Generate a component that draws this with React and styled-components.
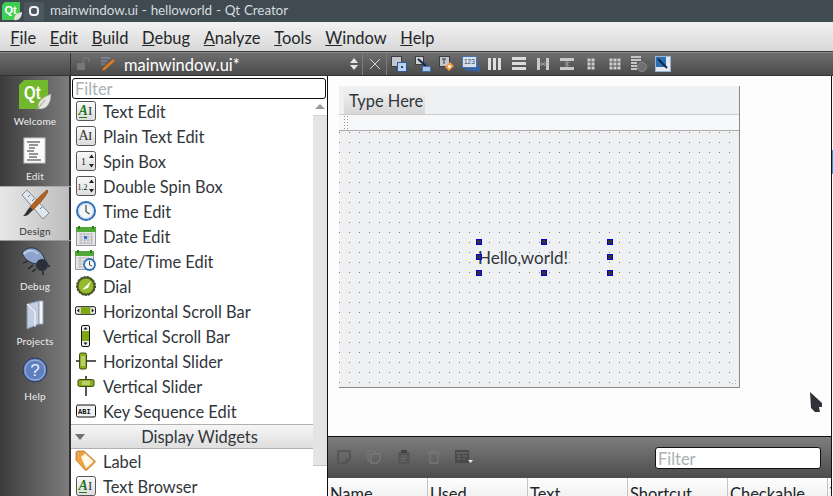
import React from 'react'
import styled, { createGlobalStyle } from 'styled-components'

const Global = createGlobalStyle`
	html, body { margin: 0; padding: 0; background: #fff; overflow: hidden; }
	*, *::before, *::after { box-sizing: border-box; }
`

const Window = styled.div`
	width: 833px;
	height: 496px;
	display: flex;
	flex-direction: column;
	overflow: hidden;
	font-family: Lato, "Open Sans", sans-serif;
	color: #31363b;
	font-size: 16.45px;
`

const TitleBar = styled.div`
	height: 22px;
	flex: none;
	display: flex;
	align-items: center;
	padding-left: 2px;
	background: #3f4a51;
	color: #d5dbdf;
	font-size: 13.5px;
	letter-spacing: -0.1px;
	word-spacing: 0.5px;
`

const TitleText = styled.span`
	margin-bottom: 2px;
`

const WinButton = styled.div`
	width: 20px;
	height: 19px;
	flex: none;
	margin: 0 6px 0 2px;
	border-radius: 2px;
	background: #4c5760;
	display: flex;
	align-items: center;
	justify-content: center;
	&::after {
		content: '';
		width: 10px;
		height: 10px;
		border: 2px solid #f2f2f2;
		border-radius: 4px;
	}
`

const MenuBar = styled.div`
	height: 30px;
	flex: none;
	display: flex;
	align-items: center;
	padding: 2px 0 0 3.5px;
	background: linear-gradient(#f2f2f2, #d8d8d8);
	border-bottom: 1px solid #3a3a3a;
`

const MenuItem = styled.div`
	padding: 0 6.85px;
	color: #232629;
	span { text-decoration: underline; }
`

const DocBar = styled.div`
	height: 24px;
	flex: none;
	display: flex;
	align-items: center;
	background: linear-gradient(#6e6e6e, #5e5e5e 45%, #4a4a4a);
	border-top: 1px solid #8a8a8a;
	border-bottom: 1px solid #333;
`

const DocCorner = styled.div`
	width: 71px;
	height: 100%;
	flex: none;
	border-right: 1px solid #333;
`

const DocName = styled.div`
	width: 221px;
	flex: none;
	margin-left: 5px;
	padding-top: 2px;
	color: #fff;
`

const DocIcon = styled.div`
	width: ${p => p.w || 24}px;
	flex: none;
	display: flex;
	justify-content: center;
`

const Sep = styled.div`
	width: 1px;
	height: 100%;
	flex: none;
	background: #7a7a7a;
`

const Body = styled.div`
	flex: 1;
	min-height: 0;
	display: flex;
`

const Sidebar = styled.div`
	width: 71px;
	flex: none;
	background: linear-gradient(90deg, #3c3c3c, #7c7c7c 97%, #2e2e2e 97%);
`

const Mode = styled.div`
	height: 55px;
	display: flex;
	flex-direction: column;
	align-items: center;
	justify-content: flex-end;
	padding: 0 1px ${p => (p.active ? 3 : 4)}px 0;
	color: ${p => (p.active ? '#333' : '#eee')};
	font-size: 10px;
	letter-spacing: 0.2px;
	${p => p.active && `
		background: linear-gradient(90deg, #e8e8e8, #bdbdbd 97%, #2e2e2e 97%);
		border-top: 1px solid #aaa;
		border-bottom: 1px solid #999;
	`}
`

const ModeIcon = styled.div`
	height: 36px;
	margin-bottom: 2px;
	display: flex;
	align-items: center;
`

const WidgetBox = styled.div`
	width: 257px;
	flex: none;
	display: flex;
	flex-direction: column;
	background: #fff;
	border-right: 1px solid #111;
`

const FilterInput = styled.div`
	height: ${p => p.h}px;
	margin: ${p => p.m};
	width: ${p => p.w || 'auto'};
	flex: none;
	background: #fff;
	border: 1px solid #111;
	border-radius: 3px;
	color: #aab0b4;
	line-height: ${p => p.h}px;
	padding-left: 2px;
	overflow: hidden;
`

const ListArea = styled.div`
	flex: 1;
	min-height: 0;
	display: flex;
`

const List = styled.div`
	flex: 1;
	min-width: 0;
`

const Row = styled.div`
	height: 25px;
	display: flex;
	align-items: center;
	padding-left: 4px;
	gap: 7px;
	white-space: nowrap;
`

const RowIcon = styled.div`
	width: 21px;
	margin-top: -2px;
	display: flex;
	justify-content: center;
`

const CategoryHeader = styled.div`
	height: 25px;
	display: flex;
	align-items: center;
	padding-left: 4px;
	background: linear-gradient(#f6f6f6, #dedede);
	border-top: 1px solid #b0b0b0;
	border-bottom: 1px solid #b0b0b0;
	&::before {
		content: '';
		border: 5px solid transparent;
		border-top: 6px solid #6e6e6e;
		border-bottom: 0;
	}
	span { flex: 1; text-align: center; margin-left: 1px; }
`

const ScrollBar = styled.div`
	width: 14px;
	flex: none;
	display: flex;
	flex-direction: column;
`

const ScrollUp = styled.div`
	height: 16px;
	display: flex;
	justify-content: center;
	padding-top: 5px;
	&::after {
		content: '';
		height: 5px;
		border: 5px solid transparent;
		border-bottom: 5px solid #9a9a9a;
		border-top: 0;
	}
`

const ScrollThumb = styled.div`
	height: 351px;
	background: #e3e4e4;
	border-top: 1px solid #d4d4d4;
	border-bottom: 1px solid #c8c8c8;
`

const Editor = styled.div`
	flex: 1;
	min-width: 0;
	display: flex;
	flex-direction: column;
	background: #fdfdfd;
`

const Canvas = styled.div`
	height: 361px;
	flex: none;
	padding: 10px 0 0 11px;
	position: relative;
	border-bottom: 1px solid #111;
`

const Form = styled.div`
	width: 401px;
	height: 302px;
	display: flex;
	flex-direction: column;
	background: #eff0f1;
	border-right: 1px solid #888;
	border-bottom: 1px solid #888;
`

const FormMenu = styled.div`
	height: 29px;
	flex: none;
	padding: 5px 0 0 5px;
	border-bottom: 1px solid #ccc;
`

const FormMenuItem = styled.div`
	width: 81px;
	height: 23px;
	padding-left: 5px;
	line-height: 21px;
	background: linear-gradient(#f0f0f1, #d6d6d6);
`

const FormToolbar = styled.div`
	height: 16px;
	flex: none;
	padding-left: 5px;
	background: #f7f8f9;
	border-bottom: 1px solid #aaa;
	&::before {
		content: '';
		display: block;
		width: 5px;
		height: 100%;
		background: conic-gradient(at 1px 1px, transparent 75%, #999 0) 0 1px / 3px 3px;
	}
`

const Grid = styled.div`
	flex: 1;
	position: relative;
	background: conic-gradient(at 1px 1px, transparent 75%, #808080 0) 0 1px / 10px 10px;
`

const LabelBox = styled.div`
	position: absolute;
	left: 137px;
	top: 108px;
	width: 134px;
	height: 35px;
`

const HelloText = styled.div`
	position: absolute;
	left: 2px;
	top: 8px;
	font-size: 17px;
	white-space: nowrap;
`

const Handle = styled.div`
	position: absolute;
	left: ${p => p.x}px;
	top: ${p => p.y}px;
	width: 6px;
	height: 6px;
	background: #333;
	border: 1px solid #0000e0;
`

const Grip = styled.div`
	position: absolute;
	right: 1px;
	bottom: 1px;
	width: 9px;
	height: 9px;
	background: conic-gradient(at 1px 1px, transparent 75%, #aaa 0) 0 0 / 3px 3px;
	clip-path: polygon(100% 0, 100% 100%, 0 100%);
`

const Cursor = styled.svg`
	position: absolute;
	left: 482px;
	top: 316px;
`

const ActionBar = styled.div`
	height: 41px;
	flex: none;
	display: flex;
	align-items: center;
	padding-left: 1px;
	background: linear-gradient(#7e7e7e, #4c4c4c);
`

const ActionIcon = styled.div`
	width: 30px;
	margin-bottom: 1px;
	display: flex;
	justify-content: center;
`

const Spacer = styled.div`
	flex: 1;
`

const TableHead = styled.div`
	flex: 1;
	display: flex;
	overflow: hidden;
	background: linear-gradient(#fdfdfd, #f2f2f2);
`

const HeadCell = styled.div`
	width: 100px;
	flex: none;
	padding: 6px 0 0 2px;
	border-right: 1px solid #c4c4c4;
	color: #232629;
	white-space: nowrap;
`

const RightEdge = styled.div`
	width: 2px;
	flex: none;
	background: linear-gradient(90deg, #111 50%, #fff 50%);
	&::after {
		content: '';
		display: block;
		width: 1px;
		height: 24px;
		margin: 74px 0 0 1px;
		background: #1e9be8;
	}
`

const Ico = ({ s = 20, h, children }) => (
	<svg width={s} height={h || s} viewBox={`0 0 ${s} ${h || s}`} style={{ display: 'block' }}>{children}</svg>
)

const QtLogo = ({ s = 34 }) => (
	<svg width={s} height={s * 0.94} viewBox="0 0 34 32" style={{ display: 'block' }}>
		<path d="M6 1 H30 V23 L24 30 H1 V6 Z" fill="#72b82c" />
		<text x="6" y="20" fontSize="18" fontWeight="700" fontFamily="Liberation Sans" fill="#fff" textLength="17" lengthAdjust="spacingAndGlyphs">Qt</text>
		<path d="M20 30 C19 22 25 18 33 15 C33 24 29 31 20 30 Z" fill="#e4e6df" stroke="#9a9a90" strokeWidth=".6" />
		<path d="M18 32 L27 21" stroke="#888" strokeWidth=".8" />
	</svg>
)

const Keycap = ({ children }) => (
	<Ico s={20}>
		<defs>
			<linearGradient id="cap" x1="0" y1="0" x2="0" y2="1">
				<stop offset="0" stopColor="#fafafa" />
				<stop offset="1" stopColor="#dcdcdc" />
			</linearGradient>
		</defs>
		<rect x=".5" y=".5" width="19" height="19" rx="2" fill="url(#cap)" stroke="#555" />
		{children}
	</Ico>
)

const TextEditIcon = ({ green }) => (
	<Keycap>
		<text x="2.5" y="14" fontFamily="Liberation Serif" fontStyle={green ? 'italic' : 'normal'} fontWeight={green ? 700 : 400} fontSize="14" fill={green ? '#1f7a1f' : '#333'}>A</text>
		<text x="12" y="14" fontFamily="Liberation Serif" fontSize="13" fill="#333">I</text>
		{green && <path d="M3 16.5 H11" stroke="#1f7a1f" />}
	</Keycap>
)

const SpinIcon = ({ label, size }) => (
	<Keycap>
		<text x={label.length > 1 ? 1.5 : 5} y="13.5" fontFamily="Liberation Serif" fontSize={size} fill="#222">{label}</text>
		<path d="M13 7 L15.5 3.5 L18 7 Z M13 13 L15.5 16.5 L18 13 Z" fill="#222" />
	</Keycap>
)

const ClockIcon = () => (
	<Ico s={20}>
		<circle cx="10" cy="10" r="9" fill="#f4f6f8" stroke="#2f6fb5" strokeWidth="2" />
		<circle cx="10" cy="10" r="7.4" fill="none" stroke="#a8c8ea" strokeWidth=".8" />
		<path d="M10 4 V10.5 L13.5 13" fill="none" stroke="#444" strokeWidth="1.2" />
	</Ico>
)

const CalendarIcon = () => (
	<Ico s={20}>
		<rect x=".5" y="1.5" width="19" height="18" fill="#e4e6e8" stroke="#999" />
		<rect x="0" y="1" width="20" height="5" fill="#4fa838" />
		<path d="M3 0 V3 M17 0 V3" stroke="#2c7a20" strokeWidth="2" />
		<path d="M3 8 H17 M3 11 H17 M3 14 H17 M3 17 H17 M5 7 V18 M8.5 7 V18 M12 7 V18 M15.5 7 V18" stroke="#aeb2b6" strokeWidth=".8" />
		<rect x="8" y="10" width="3" height="3" fill="#3b6fd0" />
	</Ico>
)

const DateTimeIcon = () => (
	<Ico s={21}>
		<rect x=".5" y="1.5" width="18" height="18" fill="#e4e6e8" stroke="#999" />
		<rect x="0" y="1" width="19" height="5" fill="#4fa838" />
		<path d="M3 0 V3 M16 0 V3" stroke="#2c7a20" strokeWidth="2" />
		<path d="M3 8 H14 M3 11 H10 M3 14 H8 M3 17 H8 M5 7 V18" stroke="#aeb2b6" strokeWidth=".8" />
		<circle cx="14.5" cy="14.5" r="5.5" fill="#f4f6f8" stroke="#2f6fb5" strokeWidth="1.8" />
		<path d="M14.5 11 V15 L17 16" fill="none" stroke="#444" />
	</Ico>
)

const DialIcon = () => (
	<Ico s={20}>
		<circle cx="10" cy="10" r="9.5" fill="#4d5a22" strokeDasharray="2 1.5" stroke="#333" />
		<circle cx="10" cy="10" r="7.5" fill="#94bb2c" />
		<path d="M6 14 L15 5 L12 12 Z" fill="#fff" />
	</Ico>
)

const HScrollIcon = () => (
	<Ico s={22} h={12}>
		<rect x=".5" y="1.5" width="21" height="8" rx="1.5" fill="#eee" stroke="#111" />
		<rect x="6" y="2" width="10" height="7" fill="#7ea80f" />
		<path d="M2 5.5 L4.5 3.5 V7.5 Z M20 5.5 L17.5 3.5 V7.5 Z" fill="#111" />
	</Ico>
)

const VScrollIcon = () => (
	<Ico s={12} h={22}>
		<rect x="1.5" y=".5" width="8" height="21" rx="1.5" fill="#eee" stroke="#111" />
		<rect x="2" y="6" width="7" height="10" fill="#7ea80f" />
		<path d="M5.5 2 L3.5 4.5 H7.5 Z M5.5 20 L3.5 17.5 H7.5 Z" fill="#111" />
	</Ico>
)

const HSliderIcon = () => (
	<Ico s={20}>
		<path d="M0 10 H20" stroke="#222" strokeWidth="1.5" />
		<rect x="3.5" y="2" width="7" height="16" rx="1.5" fill="#8aae1c" stroke="#3c4a10" />
		<path d="M6 5 V15 M8 5 V15" stroke="#e6f0c0" />
	</Ico>
)

const VSliderIcon = () => (
	<Ico s={20}>
		<path d="M10 0 V20" stroke="#222" strokeWidth="1.5" />
		<rect x="2" y="3.5" width="16" height="7" rx="1.5" fill="#8aae1c" stroke="#3c4a10" />
		<path d="M6 6 H14 M6 8 H14" stroke="#e6f0c0" />
	</Ico>
)

const KeySeqIcon = () => (
	<Ico s={20} h={14}>
		<rect x=".5" y="1" width="19" height="12" rx="1.5" fill="#f1f1f1" stroke="#111" />
		<text x="2" y="10" fontFamily="Liberation Mono" fontSize="7" fontWeight="700" fill="#111">ABI</text>
	</Ico>
)

const LabelIcon = () => (
	<Ico s={21}>
		<path d="M1 3 Q1 1 3 1 H9 L20 11 Q20.5 12 19.5 13 L12 20 Q11 20.5 10 20 L1 10 Z" fill="#f0a33c" stroke="#a86a1c" strokeWidth=".7" />
		<path d="M6 7 L10 3.5 L18.5 11.5 L11 18.5 Z" fill="#fffaf0" />
		<circle cx="3.5" cy="3.5" r="1" fill="#fff" stroke="#8a5a1c" strokeWidth=".5" />
	</Ico>
)

const WelcomeIcon = () => <QtLogo s={34} />

const EditIcon = () => (
	<Ico s={24} h={27}>
		<rect x="1" y="1" width="21" height="25" fill="#fafafa" stroke="#c8c8c8" />
		<path d="M4 5 H17 M6 8 H15 M6 11 H12 M4 14 H11 M6 17 H15 M6 20 H14 M4 23 H18" stroke="#333" />
	</Ico>
)

const DesignIcon = () => (
	<Ico s={30} h={32}>
		<path d="M2 6 L7 1 L29 24 L23 30 Z" fill="#dfe6ee" stroke="#7d8a98" />
		<path d="M8 8 L10 6 M12 12 L14 10 M16 16 L18 14 M20 20 L22 18" stroke="#6a7684" />
		<path d="M27 1 C22 5 14 13 10 18 L13 21 C18 16 26 8 28 2 Z" fill="#b3611d" stroke="#6c3a10" strokeWidth=".6" />
		<path d="M10 18 L13 21 L9 25 C7 27 5 27 3 27 C6 25 6 22 10 18 Z" fill="#333" />
	</Ico>
)

const DebugIcon = () => (
	<Ico s={30} h={30}>
		<path d="M2 8 C8 -1 22 2 25 16 C18 22 6 18 2 8 Z" fill="#8ea3cb" stroke="#27324a" />
		<path d="M4 9 C9 4 14 5 18 9" fill="none" stroke="#c6d3ea" strokeWidth="1.5" />
		<circle cx="22" cy="20" r="6" fill="#2a3038" />
		<path d="M16 24 L12 27 M23 26 L23 30 M28 20 L30 22 M8 16 L3 18 M13 20 L8 24" stroke="#222" strokeWidth="1.3" />
	</Ico>
)

const ProjectsIcon = () => (
	<Ico s={20} h={30}>
		<path d="M2 4 L14 1 V24 L2 29 Z" fill="#c3cfe0" stroke="#8393aa" />
		<path d="M14 1 H18 V24 H14 Z" fill="#f2f5f9" stroke="#9aa6b8" />
		<path d="M2 4 L10 12 V27" fill="none" stroke="#fff" strokeWidth="1" />
	</Ico>
)

const HelpIcon = () => (
	<Ico s={26}>
		<circle cx="13" cy="13" r="12" fill="#5f7fbf" stroke="#24365e" />
		<circle cx="13" cy="13" r="10" fill="none" stroke="#a6b9de" />
		<text x="13" y="19" textAnchor="middle" fontFamily="Liberation Sans" fontSize="17" fill="#e8eefa">?</text>
	</Ico>
)

const LockIcon = () => (
	<Ico s={14} h={14}>
		<rect x="0" y="6" width="8" height="7" fill="#777" />
		<path d="M6 6 V3 Q6 1 9 1 Q12 1 12 3 V5" fill="none" stroke="#777" strokeWidth="1.3" />
	</Ico>
)

const PencilIcon = () => (
	<Ico s={16}>
		<path d="M1 2 H10 M1 5 H7 M1 8 H5" stroke="#8e9cb3" />
		<path d="M13 3 L15 5 L5 14 L2 15 L3 12 Z" fill="#d9822b" stroke="#8a4c12" strokeWidth=".5" />
	</Ico>
)

const UpDown = () => (
	<Ico s={10} h={14}>
		<path d="M5 1 L9 6 H1 Z M5 13 L9 8 H1 Z" fill="#e6e6e6" />
	</Ico>
)

const CloseX = () => (
	<Ico s={12}>
		<path d="M1 1 L11 11 M11 1 L1 11" stroke="#d6d6d6" strokeWidth="1" />
	</Ico>
)

const Square = ({ x, y, w, h, fill = '#c4c8cc', stroke = '#3b3f44' }) => (
	<rect x={x + 0.5} y={y + 0.5} width={w} height={h} fill={fill} stroke={stroke} />
)

const WidgetEditIcon = () => (
	<Ico s={16}>
		<Square x={0} y={0} w={10} h={10} />
		<Square x={6} y={6} w={9} h={9} fill="#bcd2ef" stroke="#2a5c98" />
		<rect x="10" y="10" width="2" height="2" fill="#1d4f8c" />
	</Ico>
)

const SignalIcon = () => (
	<Ico s={16}>
		<Square x={0} y={0} w={8} h={8} fill="#d0d0d0" />
		<path d="M3 3 L11 10" stroke="#0c2a50" strokeWidth="2" />
		<Square x={7} y={10} w={8} h={5} fill="#a8c4e8" stroke="#3f6ea8" />
	</Ico>
)

const BuddyIcon = () => (
	<Ico s={16}>
		<Square x={0} y={0} w={10} h={10} />
		<path d="M3 3 H7 M5 3 V8" stroke="#333" />
		<path d="M6 11 L11 6 L15 10 L10 15 Z" fill="#f59a3c" />
		<circle cx="10.5" cy="10.5" r="1.5" fill="#fff" />
	</Ico>
)

const TabOrderIcon = () => (
	<Ico s={18} h={16}>
		<Square x={0} y={0} w={14} h={11} fill="#d8e0ec" stroke="#4a72ad" />
		<text x="2" y="8" fontFamily="Liberation Sans" fontSize="6.5" fill="#23456f">123</text>
		<path d="M3 13.5 H14" stroke="#2a6ac0" strokeWidth="2" />
		<path d="M16.5 9 V16" stroke="#2a6ac0" strokeWidth="2" />
		<path d="M12 10.5 L15 13.5 L12 16 Z" fill="#2a6ac0" />
	</Ico>
)

const Bars = ({ vertical }) => (
	<Ico s={14}>
		{[1, 6, 11].map(p => (vertical
			? <rect key={p} x={p - 1} y="1" width="3" height="12" fill="#dcdcdc" />
			: <rect key={p} x="0" y={p - 1} width="14" height="3" fill="#dcdcdc" />))}
	</Ico>
)

const SplitH = () => (
	<Ico s={14}>
		<path d="M1 1 H4 V13 H1 Z M10 1 H13 V13 H10 Z" fill="#c8c8c8" />
		<path d="M4 7 H10 M5 5 L7 7 L5 9 M9 5 L7 7 L9 9" stroke="#9a9a9a" fill="none" />
	</Ico>
)

const SplitV = () => (
	<Ico s={16} h={14}>
		<path d="M1 1 H15 V4 H1 Z M1 10 H15 V13 H1 Z" fill="#c8c8c8" />
		<path d="M8 4 V10 M6 5 L8 7 L10 5 M6 9 L8 7 L10 9" stroke="#9a9a9a" fill="none" />
	</Ico>
)

const GridDots = ({ cols }) => (
	<Ico s={cols * 4} h={12}>
		{[0, 4, 8].map(y => Array.from({ length: cols }, (_, i) => (
			<rect key={`${y}-${i}`} x={i * 4 + 0.5} y={y + 0.5} width="3" height="3" fill="#cfcfcf" />
		)))}
	</Ico>
)

const FormIcon = () => (
	<Ico s={16}>
		<path d="M0 1 H10 M0 4 H10 M0 7 H6 M0 10 H6 M0 13 H6" stroke="#c4c4c4" strokeWidth="2" />
		<circle cx="11" cy="11" r="4.5" fill="#6e6e6e" stroke="#8a8a8a" />
	</Ico>
)

const AdjustIcon = () => (
	<Ico s={16}>
		<rect x=".5" y=".5" width="15" height="15" fill="#2d6fb0" stroke="#9ab4d0" />
		<path d="M11 1 H15 V15 H1 V11 H11 Z" fill="#e4eaf2" />
		<path d="M3 3 L12 12" stroke="#0c2a50" strokeWidth="2" />
	</Ico>
)

const NoteIcon = () => (
	<Ico s={14}>
		<path d="M1 1 H13 V9 L9 13 H1 Z" fill="none" stroke="#525252" strokeWidth="1.5" />
		<path d="M9 13 V9 H13" fill="#525252" />
	</Ico>
)

const CopyIcon = () => (
	<Ico s={14}>
		<path d="M1 1 H8 V3 M1 1 V11 H3" fill="none" stroke="#787878" strokeWidth="1.2" />
		<path d="M4 4 H13 V10 L10 13 H4 Z" fill="none" stroke="#787878" strokeWidth="1.4" />
	</Ico>
)

const PasteIcon = () => (
	<Ico s={14}>
		<rect x="1.5" y="2" width="11" height="12" fill="#555" />
		<rect x="4" y="0" width="6" height="3" fill="#444" />
		<path d="M4 6 H10 M4 8.5 H10 M4 11 H8" stroke="#6e6e6e" />
	</Ico>
)

const TrashIcon = () => (
	<Ico s={14}>
		<path d="M1 3 H13 M5 3 V1 H9 V3 M3 3 V13 H11 V3" fill="none" stroke="#787878" strokeWidth="1.3" />
	</Ico>
)

const TableMenuIcon = () => (
	<Ico s={18} h={14}>
		<rect x="0" y="0" width="14" height="13" fill="#4a4a4a" />
		<path d="M1 3 H13 M2 6 H6 M2 9 H6 M8 6 H12 M8 9 H10" stroke="#777" />
		<path d="M13 10 H18 L15.5 13 Z" fill="#e6e6e6" />
	</Ico>
)

const menus = [['F', 'ile'], ['E', 'dit'], ['B', 'uild'], ['D', 'ebug'], ['A', 'nalyze'], ['T', 'ools'], ['W', 'indow'], ['H', 'elp']]

const modes = [
	['Welcome', <WelcomeIcon />],
	['Edit', <EditIcon />],
	['Design', <DesignIcon />, true],
	['Debug', <DebugIcon />],
	['Projects', <ProjectsIcon />],
	['Help', <HelpIcon />],
]

const inputs = [
	['Text Edit', <TextEditIcon green />],
	['Plain Text Edit', <TextEditIcon />],
	['Spin Box', <SpinIcon label="1" size={10} />],
	['Double Spin Box', <SpinIcon label="1.2" size={8} />],
	['Time Edit', <ClockIcon />],
	['Date Edit', <CalendarIcon />],
	['Date/Time Edit', <DateTimeIcon />],
	['Dial', <DialIcon />],
	['Horizontal Scroll Bar', <HScrollIcon />],
	['Vertical Scroll Bar', <VScrollIcon />],
	['Horizontal Slider', <HSliderIcon />],
	['Vertical Slider', <VSliderIcon />],
	['Key Sequence Edit', <KeySeqIcon />],
]

const display = [
	['Label', <LabelIcon />],
	['Text Browser', <TextEditIcon green />],
]

const tools = [
	<WidgetEditIcon />, <SignalIcon />, <BuddyIcon />, <TabOrderIcon />,
	<Bars vertical />, <Bars />, <SplitH />, <SplitV />,
	<GridDots cols={2} />, <GridDots cols={3} />, <FormIcon />, <AdjustIcon />,
]

const handles = [[0, 0], [65, 0], [131, 0], [0, 15], [131, 15], [0, 31], [65, 31], [131, 31]]

const columns = ['Name', 'Used', 'Text', 'Shortcut', 'Checkable', 'ToolTip']

const WidgetRow = ({ item }) => (
	<Row>
		<RowIcon>{item[1]}</RowIcon>
		{item[0]}
	</Row>
)

export default function App() {
	return (
		<Window>
			<Global />
			<TitleBar>
				<svg width="20" height="19" viewBox="0 0 20 19" style={{ display: 'block', flex: 'none' }}>
					<path d="M3 0 H18 V13 L14 18 H0 V3 Z" fill="#41cd52" />
					<text x="2.5" y="12" fontSize="11" fontWeight="700" fontFamily="Liberation Sans" fill="#fff">Qt</text>
					<path d="M12 18 C12 13 15 11 20 10 C20 15 17 19 12 18 Z" fill="#dfe3da" />
				</svg>
				<WinButton />
				<TitleText>mainwindow.ui - helloworld - Qt Creator</TitleText>
			</TitleBar>
			<MenuBar>
				{menus.map(m => <MenuItem key={m[0]}><span>{m[0]}</span>{m[1]}</MenuItem>)}
			</MenuBar>
			<DocBar>
				<DocCorner />
				<DocIcon w={26}><LockIcon /></DocIcon>
				<DocIcon w={22}><PencilIcon /></DocIcon>
				<DocName>mainwindow.ui*</DocName>
				<DocIcon w={17}><UpDown /></DocIcon>
				<Sep />
				<DocIcon w={23}><CloseX /></DocIcon>
				<Sep />
				{tools.map((t, i) => <DocIcon key={i} w={24}>{t}</DocIcon>)}
			</DocBar>
			<Body>
				<Sidebar>
					{modes.map(m => (
						<Mode key={m[0]} active={m[2]}>
							<ModeIcon>{m[1]}</ModeIcon>
							{m[0]}
						</Mode>
					))}
				</Sidebar>
				<WidgetBox>
					<FilterInput h={21} m="2px 1px 0 1px">Filter</FilterInput>
					<ListArea>
						<List>
							{inputs.map(item => <WidgetRow key={item[0]} item={item} />)}
							<CategoryHeader><span>Display Widgets</span></CategoryHeader>
							{display.map(item => <WidgetRow key={item[0]} item={item} />)}
						</List>
						<ScrollBar>
							<ScrollUp />
							<ScrollThumb />
						</ScrollBar>
					</ListArea>
				</WidgetBox>
				<Editor>
					<Canvas>
						<Form>
							<FormMenu><FormMenuItem>Type Here</FormMenuItem></FormMenu>
							<FormToolbar />
							<Grid>
								<LabelBox>
									<HelloText>Hello,world!</HelloText>
									{handles.map(h => <Handle key={h.join()} x={h[0]} y={h[1]} />)}
								</LabelBox>
								<Grip />
							</Grid>
						</Form>
						<Cursor width="13" height="21" viewBox="0 0 13 21">
							<path d="M0 0 L12 11 L12 15 L9 15 L10 20 L5 20 L1 16 Z" fill="#2f3338" />
						</Cursor>
					</Canvas>
					<ActionBar>
						<ActionIcon><NoteIcon /></ActionIcon>
						<ActionIcon><CopyIcon /></ActionIcon>
						<ActionIcon><PasteIcon /></ActionIcon>
						<ActionIcon><TrashIcon /></ActionIcon>
						<ActionIcon><TableMenuIcon /></ActionIcon>
						<Spacer />
						<FilterInput h={22} w="166px" m="0 10px 0 0">Filter</FilterInput>
					</ActionBar>
					<TableHead>
						{columns.map(c => <HeadCell key={c}>{c}</HeadCell>)}
					</TableHead>
				</Editor>
				<RightEdge />
			</Body>
		</Window>
	)
}
